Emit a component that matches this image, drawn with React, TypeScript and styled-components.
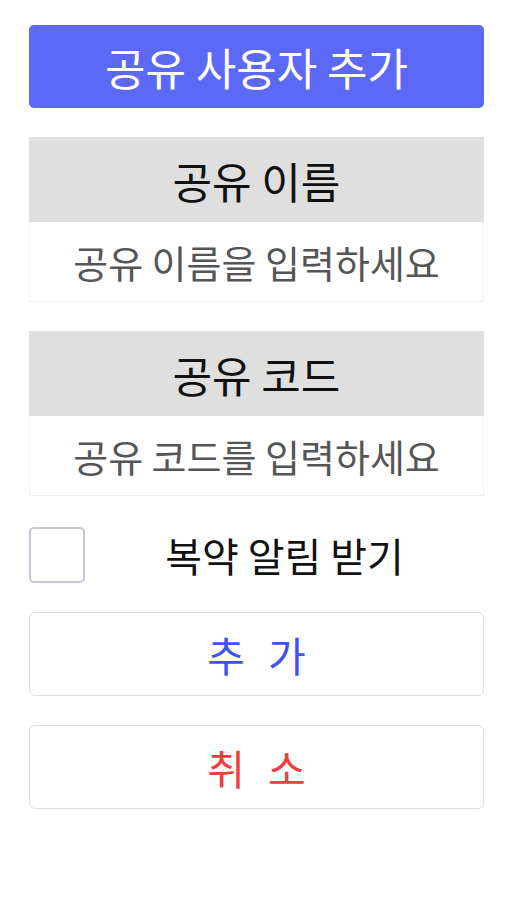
import styled, { createGlobalStyle } from 'styled-components';

const GlobalStyle = createGlobalStyle`
	body {
		margin: 0;
		background: #ffffff;
		font-family: 'Noto Sans CJK KR', 'Noto Sans', sans-serif;
	}
`;

const Page = styled.div`
	display: flex;
	flex-direction: column;
	gap: 29px;
	padding: 25px 28px 0 29px;
`;

const TitleBar = styled.div`
	height: 83px;
	display: flex;
	align-items: center;
	justify-content: center;
	background-color: #5c68f6;
	border-radius: 5px;
	color: #ffffff;
	font-size: 44px;
`;

const Field = styled.div`
	display: flex;
	flex-direction: column;
`;

const FieldLabel = styled.div`
	height: 85px;
	display: flex;
	align-items: center;
	justify-content: center;
	background-color: #dfdfdf;
	color: #111111;
	font-size: 43px;
`;

const FieldInput = styled.input`
	height: 80px;
	box-sizing: border-box;
	border: 1px solid #f0f0f0;
	border-top: none;
	outline: none;
	background: #ffffff;
	text-align: center;
	font-family: inherit;
	font-size: 38px;
	color: #333333;
	padding: 0;
	&::placeholder {
		color: #555555;
	}
`;

const CheckRow = styled.label`
	display: flex;
	align-items: center;
	height: 56px;
	margin-top: 2px;
`;

const CheckBox = styled.span`
	width: 56px;
	height: 56px;
	box-sizing: border-box;
	border: 2px solid #c3c7d3;
	border-radius: 5px;
	flex-shrink: 0;
`;

const CheckText = styled.span`
	flex: 1;
	text-align: center;
	font-size: 40px;
	color: #111111;
`;

const ActionButton = styled.button<{ $tone: string }>`
	height: 84px;
	box-sizing: border-box;
	border: 1px solid #dedede;
	border-radius: 6px;
	background: #ffffff;
	font-family: inherit;
	font-size: 41px;
	letter-spacing: 7px;
	text-indent: 7px;
	color: ${(p) => p.$tone};
	cursor: pointer;
`;

const App = () => {
	return (
		<>
			<GlobalStyle />
			<Page>
				<TitleBar>공유 사용자 추가</TitleBar>
				<Field>
					<FieldLabel>공유 이름</FieldLabel>
					<FieldInput placeholder="공유 이름을 입력하세요" />
				</Field>
				<Field>
					<FieldLabel>공유 코드</FieldLabel>
					<FieldInput placeholder="공유 코드를 입력하세요" />
				</Field>
				<CheckRow>
					<CheckBox />
					<CheckText>복약 알림 받기</CheckText>
				</CheckRow>
				<ActionButton $tone="#3f51f2">추 가</ActionButton>
				<ActionButton $tone="#f23c3c">취 소</ActionButton>
			</Page>
		</>
	);
};

export default App;
